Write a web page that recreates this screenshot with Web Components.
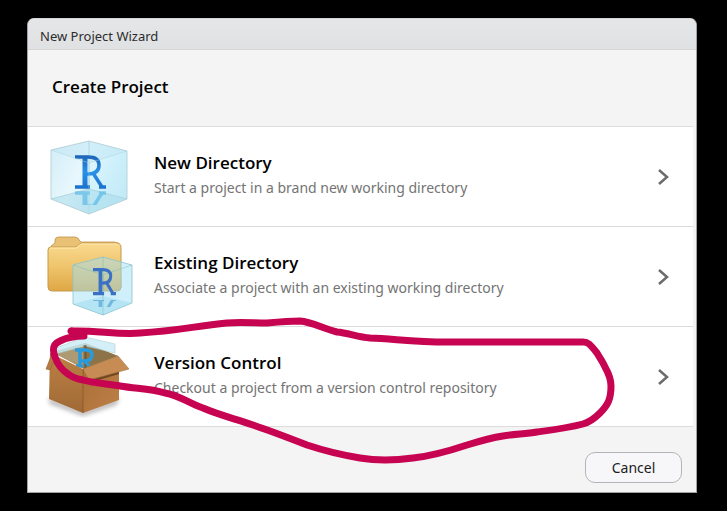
<!DOCTYPE html>
<html lang="en">
<head>
<meta charset="utf-8">
<title>New Project Wizard</title>
<style>
html, body { min-height: 100%; }
body { margin: 0; background: #000; font-family: "Noto Sans", "Open Sans", sans-serif; color: #000; }
</style>
</head>
<body>
<wizard-stage>
  <wizard-dialog>
    <span slot="title">New Project Wizard</span>
    <span slot="heading">Create Project</span>
    <wizard-option>
      <cube-icon slot="icon"></cube-icon>
      <span slot="name">New Directory</span>
      <span slot="detail">Start a project in a brand new working directory</span>
    </wizard-option>
    <wizard-option>
      <folder-icon slot="icon"></folder-icon>
      <span slot="name">Existing Directory</span>
      <span slot="detail">Associate a project with an existing working directory</span>
    </wizard-option>
    <wizard-option>
      <package-icon slot="icon"></package-icon>
      <span slot="name">Version Control</span>
      <span slot="detail">Checkout a project from a version control repository</span>
    </wizard-option>
    <push-button slot="actions">Cancel</push-button>
  </wizard-dialog>
  <pen-mark slot="overlay"></pen-mark>
</wizard-stage>

<script>
function define(name, html) {
  const template = document.createElement('template');
  template.innerHTML = html;
  customElements.define(name, class extends HTMLElement {
    constructor() {
      super();
      this.attachShadow({ mode: 'open' }).append(template.content.cloneNode(true));
    }
  });
}

define('wizard-stage', `
<style>
:host { display: block; position: relative; padding: 18px 30px 18px 27px; }
</style>
<slot></slot><slot name="overlay"></slot>`);

define('wizard-dialog', `
<style>
:host { display: flex; flex-direction: column; background: #f4f4f4; border: 1px solid #a0a2a4; border-top-color: #d4d6d8; border-radius: 7px 7px 0 0; overflow: hidden; }
header { background: linear-gradient(#e5e6e8, #dfe1e3); border-bottom: 1px solid #d5d7d8; padding: 7px 12px 3px; font-size: 13px; line-height: 20px; color: #2c2c2c; }
h1 { margin: 0; padding: 25px 24px 27px; font-family: "Open Sans", sans-serif; font-size: 17px; line-height: 24px; font-weight: 600; }
.list { border-top: 1px solid #dcdcdc; margin-right: 3px; }
footer { display: flex; justify-content: flex-end; padding: 25px 14px 9px; }
</style>
<header><slot name="title"></slot></header>
<h1><slot name="heading"></slot></h1>
<div class="list"><slot></slot></div>
<footer><slot name="actions"></slot></footer>`);

define('wizard-option', `
<style>
:host { display: block; }
button { display: flex; align-items: center; width: 100%; height: 100px; box-sizing: border-box; margin: 0; padding: 0 24px 0 16px; border: 0; border-bottom: 1px solid #dcdcdc; border-radius: 0; background: #fff; font: inherit; color: #000; text-align: left; }
.text { display: flex; flex-direction: column; flex: 1; padding: 0 0 4px 10px; }
.name { font-family: "Open Sans", sans-serif; font-size: 17px; line-height: 26px; font-weight: 600; }
.detail { font-size: 14px; line-height: 24px; color: #747474; }
svg { width: 12px; height: 18px; fill: none; stroke: #6b6b6b; stroke-width: 2.5; }
</style>
<button type="button">
  <slot name="icon"></slot>
  <span class="text"><span class="name"><slot name="name"></slot></span><span class="detail"><slot name="detail"></slot></span></span>
  <svg viewBox="0 0 12 18" aria-hidden="true"><path d="M2 2l8 7-8 7"/></svg>
</button>`);

define('push-button', `
<style>
:host { display: block; }
button { display: block; min-width: 97px; padding: 4px 24px; border: 1px solid #b4b4b6; border-radius: 10px; background: #f7f7fa; font: inherit; font-size: 14px; line-height: 21px; color: #1c1c1c; }
</style>
<button type="button"><slot></slot></button>`);

const iconStyle = `<style>:host { display: block; width: 100px; height: 98px; flex: none; } svg { display: block; width: 100px; height: 98px; }</style>`;
/* Slab-serif R drawn as pen strokes in a 31 x 34 box. */
const letterStrokes = `<path d="M0 2H13C21 2 24 5 24 10C24 16 20 19 13 19H10M18 18L27 32"/><path d="M0 32H15M24 32H31" /><path d="M10 2V32" stroke-width="5"/>`;

define('cube-icon', iconStyle + `
<svg viewBox="0 0 100 98" aria-hidden="true">
  <defs>
    <linearGradient id="left" x2="1" y2="1"><stop stop-color="#d2ecf6"/><stop offset=".6" stop-color="#e8f8fd"/><stop offset="1" stop-color="#cfebf4"/></linearGradient>
    <linearGradient id="right" x2="1" y2="1"><stop stop-color="#e6f8fe"/><stop offset=".5" stop-color="#cdf0fb"/><stop offset="1" stop-color="#bde8f5"/></linearGradient>
    <linearGradient id="ink" gradientUnits="userSpaceOnUse" x1="0" y1="0" x2="0" y2="34"><stop stop-color="#1d62b5"/><stop offset=".5" stop-color="#2a90e8"/><stop offset="1" stop-color="#1b6fcc"/></linearGradient>
    <clipPath id="mirror"><path d="M25 63H68V77H25Z"/></clipPath>
  </defs>
  <path d="M7 22L45 13V86L7 71Z" fill="url(#left)"/>
  <path d="M45 13L83 23V71L45 86Z" fill="url(#right)"/>
  <path d="M7 22L45 13L83 23L45 35Z" fill="#c0e6f3" fill-opacity=".5"/>
  <path d="M7 71L45 61L83 71L45 86Z" fill="#a3d9ea" fill-opacity=".5"/>
  <path d="M45 13V61L7 71M45 61L83 71" fill="none" stroke="#a5cdd7" stroke-width=".7"/>
  <g clip-path="url(#mirror)"><g transform="translate(31 97) scale(1 -1)" fill="none" stroke="#4cb2e5" stroke-width="3.5" opacity=".6">${letterStrokes}</g></g>
  <g transform="translate(31 27)" fill="none" stroke="url(#ink)" stroke-width="3.5">${letterStrokes.replace('M10 2V32', 'M10 2L10.010 32')}</g>
  <path d="M45 35V86M7 22L45 35L83 23" stroke="#a7d4df" stroke-width=".8" fill="none" opacity=".6"/>
  <path d="M7 22L45 13L83 23V71L45 86L7 71Z" fill="none" stroke="#b3cfd5" stroke-width=".9"/>
</svg>`);

define('folder-icon', iconStyle + `
<svg viewBox="0 0 100 98" aria-hidden="true">
  <defs>
    <linearGradient id="front" x2="0" y2="1"><stop stop-color="#f9d98f"/><stop offset=".5" stop-color="#efc46c"/><stop offset="1" stop-color="#dea744"/></linearGradient>
    <clipPath id="mirror"><path d="M45 72H77V79H45Z"/></clipPath>
  </defs>
  <path d="M7 60V18L11 15V12Q11 9 15 9H31Q34 9 36 13L37 14H70Q75 14 76 18L77 60Z" fill="#e9c174" stroke="#bc934b" stroke-width=".8"/>
  <path d="M4 22Q4 19 7 19H32L37 15H73Q77 15 77 20V59Q77 63 73 63H8Q4 63 4 59Z" fill="url(#front)" stroke="#c69a4c"/>
  <path d="M6 20H32L37 16H73" fill="none" stroke="#ffe9ae"/>
  <path d="M29 37L59 29L88 37V75L59 87L29 76Z" fill="#a0e0f6" fill-opacity=".5" stroke="#8bc3cc" stroke-width=".8"/>
  <path d="M29 76L59 68L88 75L59 87Z" fill="#8fd5eb" fill-opacity=".4"/>
  <path d="M29 37L59 47L88 37M59 47V87M59 29V68" fill="none" stroke="#6db9b4" stroke-width=".6" opacity=".7"/>
  <g clip-path="url(#mirror)"><g transform="translate(49 97) scale(.74 -.8)" fill="none" stroke="#469cce" stroke-width="4" opacity=".6">${letterStrokes}</g></g>
  <g transform="translate(49 40) scale(.74 .8)" fill="none" stroke="#3a70c6" stroke-width="4">${letterStrokes}</g>
</svg>`);

define('package-icon', iconStyle + `
<svg viewBox="0 0 100 98" aria-hidden="true">
  <defs>
    <linearGradient id="side" x2="0" y2="1"><stop stop-color="#bd8046"/><stop offset="1" stop-color="#a06a35"/></linearGradient>
    <linearGradient id="front" x2="1" y2="1"><stop stop-color="#a86c37"/><stop offset="1" stop-color="#bd8047"/></linearGradient>
    <filter id="soft"><feGaussianBlur stdDeviation="2"/></filter>
  </defs>
  <path d="M4 70L39 83L76 70L72 77L39 88L6 76Z" fill="#888" opacity=".6" filter="url(#soft)"/>
  <path d="M8 24L41 15L74 28L40 41Z" fill="#a58f62"/>
  <path d="M41 15V40L10 25Z" fill="#ad9a72"/><path d="M41 15V40L74 28Z" fill="#8d7448"/>
  <path d="M12 20L41 9L71 16V25L41 18L12 26Z" fill="#c9edf7" opacity=".8" stroke="#a5c8cc" stroke-width=".7"/>
  <path d="M41 17V40" stroke="#5a4a2c" stroke-width="3" opacity=".6"/>
  <path d="M31 22H42Q48 22 48 27Q48 33 40 33H35M36 22V38M32 38H39M41 33L45 38" fill="none" stroke="#299bdc" stroke-width="3.500"/>
  <path d="M6 25L39 41V85L5 71Z" fill="url(#side)"/>
  <path d="M39 41L75 29V72L39 85Z" fill="url(#front)"/>
  <path d="M43 51L75 40V46L48 54Z" fill="#704620"/>
  <path d="M9 23L2 41L6 42L12 28Z" fill="#b57a42" stroke="#966332" stroke-width=".6"/>
  <path d="M39 41L74 28L85 41L45 52Z" fill="#c68c54" stroke="#a87444" stroke-width=".6"/>
  <path d="M39 41V85" stroke="#8a572a" stroke-width=".8"/>
</svg>`);

define('pen-mark', `
<style>
:host { position: absolute; top: 0; left: 0; pointer-events: none; }
svg { display: block; width: 727px; height: 511px; }
</style>
<svg viewBox="0 0 727 511" aria-hidden="true">
  <path d="M72 331C95 330 119 335 140 333C177 331 195 326 227 323C240 322 253 323 267 323C278 322 289 321 300 321C312 322 324 329 337 332C348 333 358 337 370 338C395 339 414 342 447 342H583C588 342 590 344 597 353C600 358 603 362 605 367C609 374 611 379 611 386C611 399 608 405 600 413C594 419 590 422 583 424C568 428 552 430 537 432C526 434 515 434 503 436C490 438 480 441 467 445C449 451 432 456 413 458C399 460 377 461 360 458C342 455 325 451 307 445C289 438 271 431 253 425C236 419 219 415 203 408C188 403 181 396 165 393C149 388 137 389 120 386C107 384 93 383 83 380C76 379 72 377 68 374C62 370 57 363 55 357C52 349 53 344 60 341C68 337 76 336 84 336" fill="none" stroke="#c70452" stroke-width="7" stroke-linecap="round" stroke-linejoin="round"/>
  <path d="M71 331L82 334" fill="none" stroke="#c70452" stroke-width="7" stroke-linecap="round"/>
</svg>`);
</script>
</body>
</html>
